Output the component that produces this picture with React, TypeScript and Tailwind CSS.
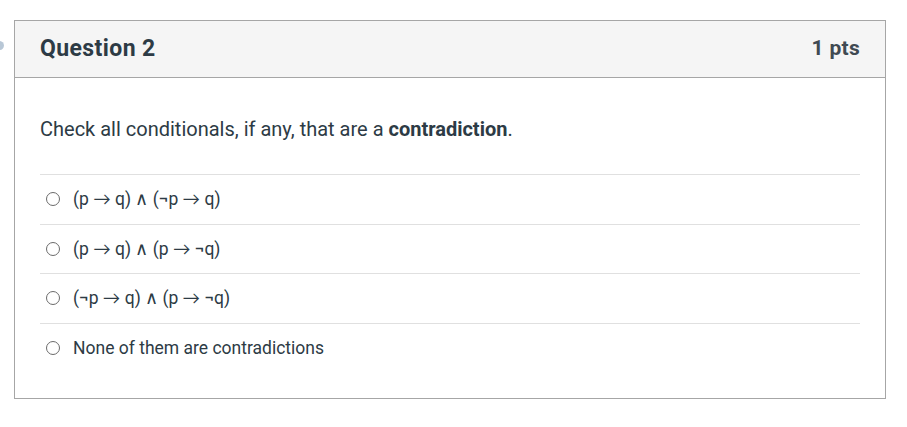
import React from 'react';

const options = [
    '(p → q) ∧ (¬p → q)',
    '(p → q) ∧ (p → ¬q)',
    '(¬p → q) ∧ (p → ¬q)',
    'None of them are contradictions',
];

// the arrows in the original are long and thin, Lato's glyph is the closest
function Formula({ text }: { text: string }) {
    const parts = text.split(/(→)/);
    return (
        <span>
            {parts.map((p, i) =>
                p === '→' ? (
                    <span key={i} className="font-['Lato',sans-serif]">
                        {p}
                    </span>
                ) : (
                    <span key={i}>{p}</span>
                ),
            )}
        </span>
    );
}

function Radio() {
    return <span className="inline-block h-[14px] w-[14px] shrink-0 rounded-full border-[1.5px] border-[#6b6b6b] bg-white" />;
}

export default function App() {
    return (
        <div className="relative h-[427px] w-[907px] bg-white pt-5 pl-[14px] font-['Roboto',sans-serif] text-[#2d3b45]">
            {/* flag marker peeking in from the left edge */}
            <span className="absolute top-[41px] -left-[5px] h-[9px] w-[9px] rounded-full bg-[#b8c7d6]" />

            <div className="w-[872px] border border-[#a6a6a6]">
                <div className="flex h-[57px] items-center justify-between border-b border-[#a6a6a6] bg-[#f5f5f5] px-[25px]">
                    <h2 className="text-[23px] font-bold tracking-[0.4px]">Question 2</h2>
                    <span className="text-[21px] font-bold tracking-[0.3px] text-[#404a52]">1 pts</span>
                </div>

                <div className="px-[25px] pt-[38px] pb-[26px]">
                    <p className="text-[20px] leading-[26px]">
                        Check all conditionals, if any, that are a <strong className="font-bold">contradiction</strong>.
                    </p>

                    <div className="mt-[32px]">
                        {options.map((opt) => (
                            <label
                                key={opt}
                                className="flex h-[49.5px] items-center gap-[13px] border-t border-[#e0e0e0] pl-[6px] text-[17.5px]"
                            >
                                <Radio />
                                <Formula text={opt} />
                            </label>
                        ))}
                    </div>
                </div>
            </div>
        </div>
    );
}
